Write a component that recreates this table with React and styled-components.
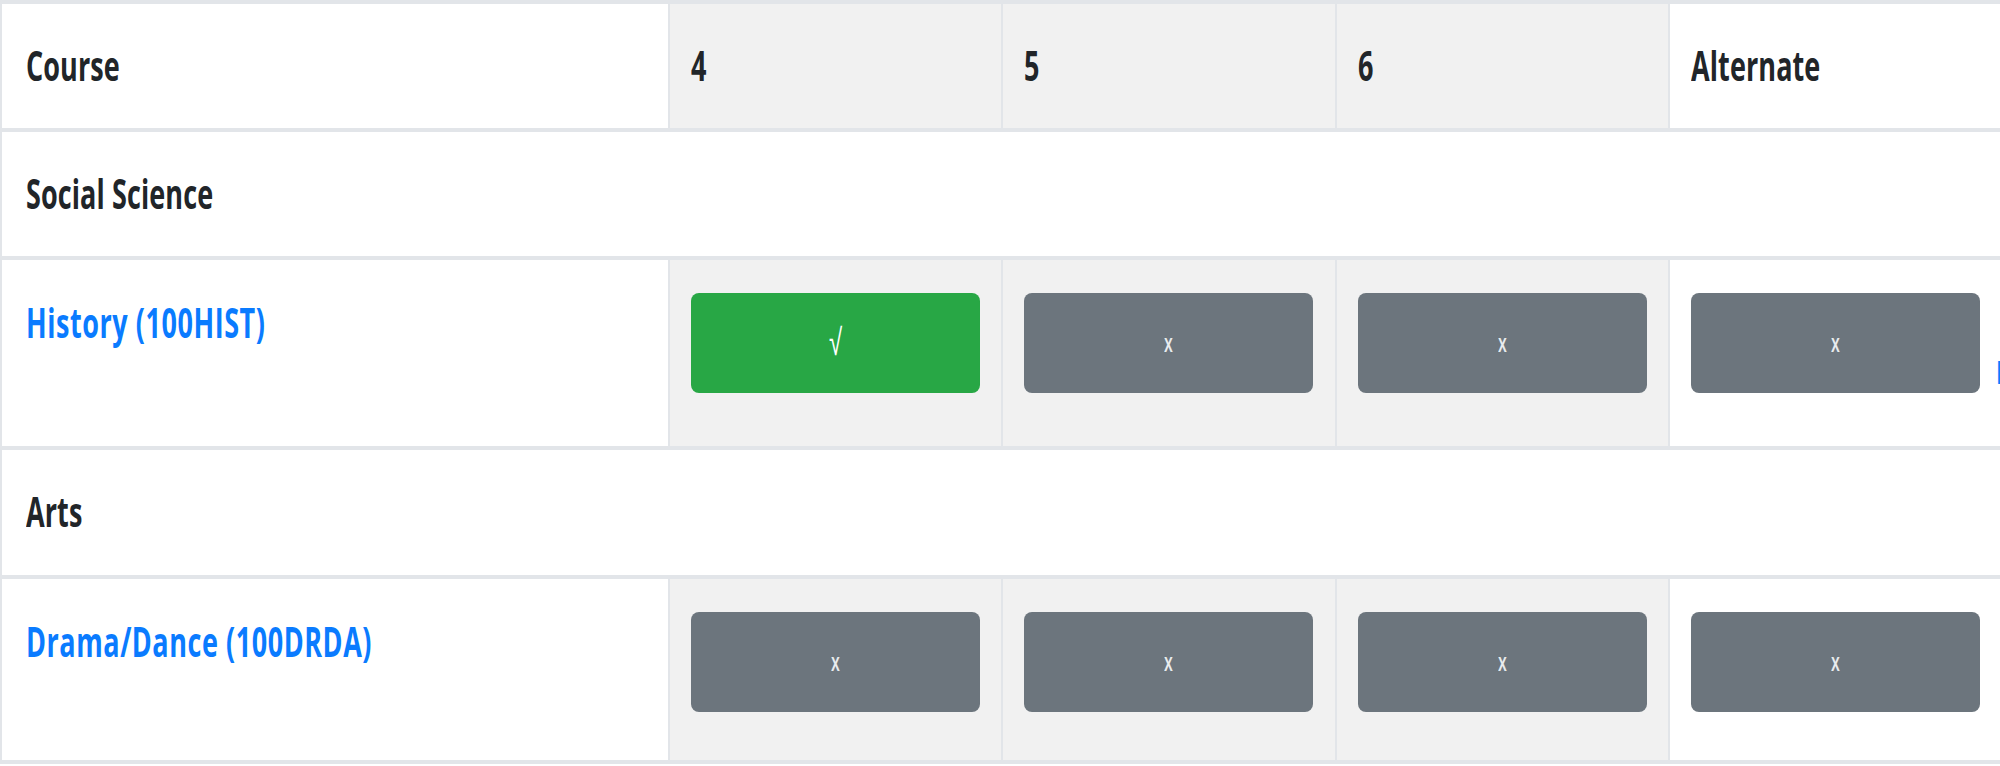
import React from 'react';
import styled, { createGlobalStyle } from 'styled-components';

const GlobalStyle = createGlobalStyle`
  html, body {
    margin: 0;
    padding: 0;
    background: #ffffff;
    overflow: hidden;
  }
  body {
    font-family: "Open Sans", "Liberation Sans", sans-serif;
    color: #212529;
  }
`;

const Table = styled.div`
  width: 2000px;
  border-top: 4px solid #e2e5e9;
`;

const Row = styled.div`
  display: grid;
  grid-template-columns: 668px 333px 334px 333px minmax(0, 1fr);
  height: ${(p) => p.$h}px;
  border-bottom: 4px solid #e2e5e9;
`;

const SectionRow = styled.div`
  display: flex;
  align-items: center;
  height: ${(p) => p.$h}px;
  padding-left: 24px;
  border-left: 2px solid #e2e5e9;
  border-bottom: 4px solid #e2e5e9;
`;

const Cell = styled.div`
  box-sizing: border-box;
  display: flex;
  align-items: ${(p) => (p.$top ? 'flex-start' : 'center')};
  gap: 16px;
  min-width: 0;
  overflow: hidden;
  padding: ${(p) => p.$pad || '0 0 0 21px'};
  border-left: 2px solid #e2e5e9;
  background: ${(p) => (p.$shade ? '#f1f1f1' : '#ffffff')};
`;

const Label = styled.span`
  display: inline-block;
  font-size: 27px;
  font-weight: 700;
  line-height: 1.5;
  white-space: nowrap;
  transform: scaleY(1.55);
  letter-spacing: ${(p) => (p.$link ? '0.55px' : '0.1px')};
  color: ${(p) => (p.$link ? '#0a7bff' : '#212529')};
  margin-top: ${(p) => p.$mt || 0}px;
`;

const Toggle = styled.button`
  flex-shrink: 0;
  width: 289px;
  height: 100px;
  border: none;
  border-radius: 8px;
  background: ${(p) => (p.$on ? '#28a745' : '#6c757d')};
  color: ${(p) => (p.$on ? '#ffffff' : '#e9ecef')};
  display: flex;
  align-items: center;
  justify-content: center;
  padding: 0;
  cursor: pointer;
`;

const Mark = styled.span`
  display: inline-block;
  font-family: ${(p) => (p.$on ? '"Liberation Sans", "DejaVu Sans", sans-serif' : '"Open Sans", sans-serif')};
  font-size: ${(p) => (p.$on ? 24 : 16)}px;
  font-weight: ${(p) => (p.$on ? 400 : 600)};
  line-height: 1;
  transform: scaleY(1.55);
`;

const periods = ['4', '5', '6'];

const courses = [
  { section: 'Social Science', name: 'History (100HIST)', picks: [true, false, false, false], h: 186, sh: 124 },
  { section: 'Arts', name: 'Drama/Dance (100DRDA)', picks: [false, false, false, false], h: 181, sh: 125 },
];

const Choice = ({ on }) => (
  <Toggle $on={on}>
    <Mark $on={on}>{on ? '√' : 'x'}</Mark>
  </Toggle>
);

const App = () => {
  return (
    <>
      <GlobalStyle />
      <Table>
        <Row $h={124}>
          <Cell $pad="0 0 0 24px">
            <Label>Course</Label>
          </Cell>
          {periods.map((p) => (
            <Cell key={p} $shade>
              <Label>{p}</Label>
            </Cell>
          ))}
          <Cell>
            <Label>Alternate</Label>
          </Cell>
        </Row>
        {courses.map((c) => (
          <React.Fragment key={c.name}>
            <SectionRow $h={c.sh}>
              <Label>{c.section}</Label>
            </SectionRow>
            <Row $h={c.h}>
              <Cell $top $pad="43px 0 0 24px">
                <Label $link>{c.name}</Label>
              </Cell>
              {c.picks.slice(0, 3).map((on, i) => (
                <Cell key={i} $top $shade $pad="33px 0 0 21px">
                  <Choice on={on} />
                </Cell>
              ))}
              <Cell $top $pad="33px 0 0 21px">
                <Choice on={c.picks[3]} />
                {c.section === 'Social Science' && (
                  <Label $link $mt={56}>remove</Label>
                )}
              </Cell>
            </Row>
          </React.Fragment>
        ))}
      </Table>
    </>
  );
};

export default App;
